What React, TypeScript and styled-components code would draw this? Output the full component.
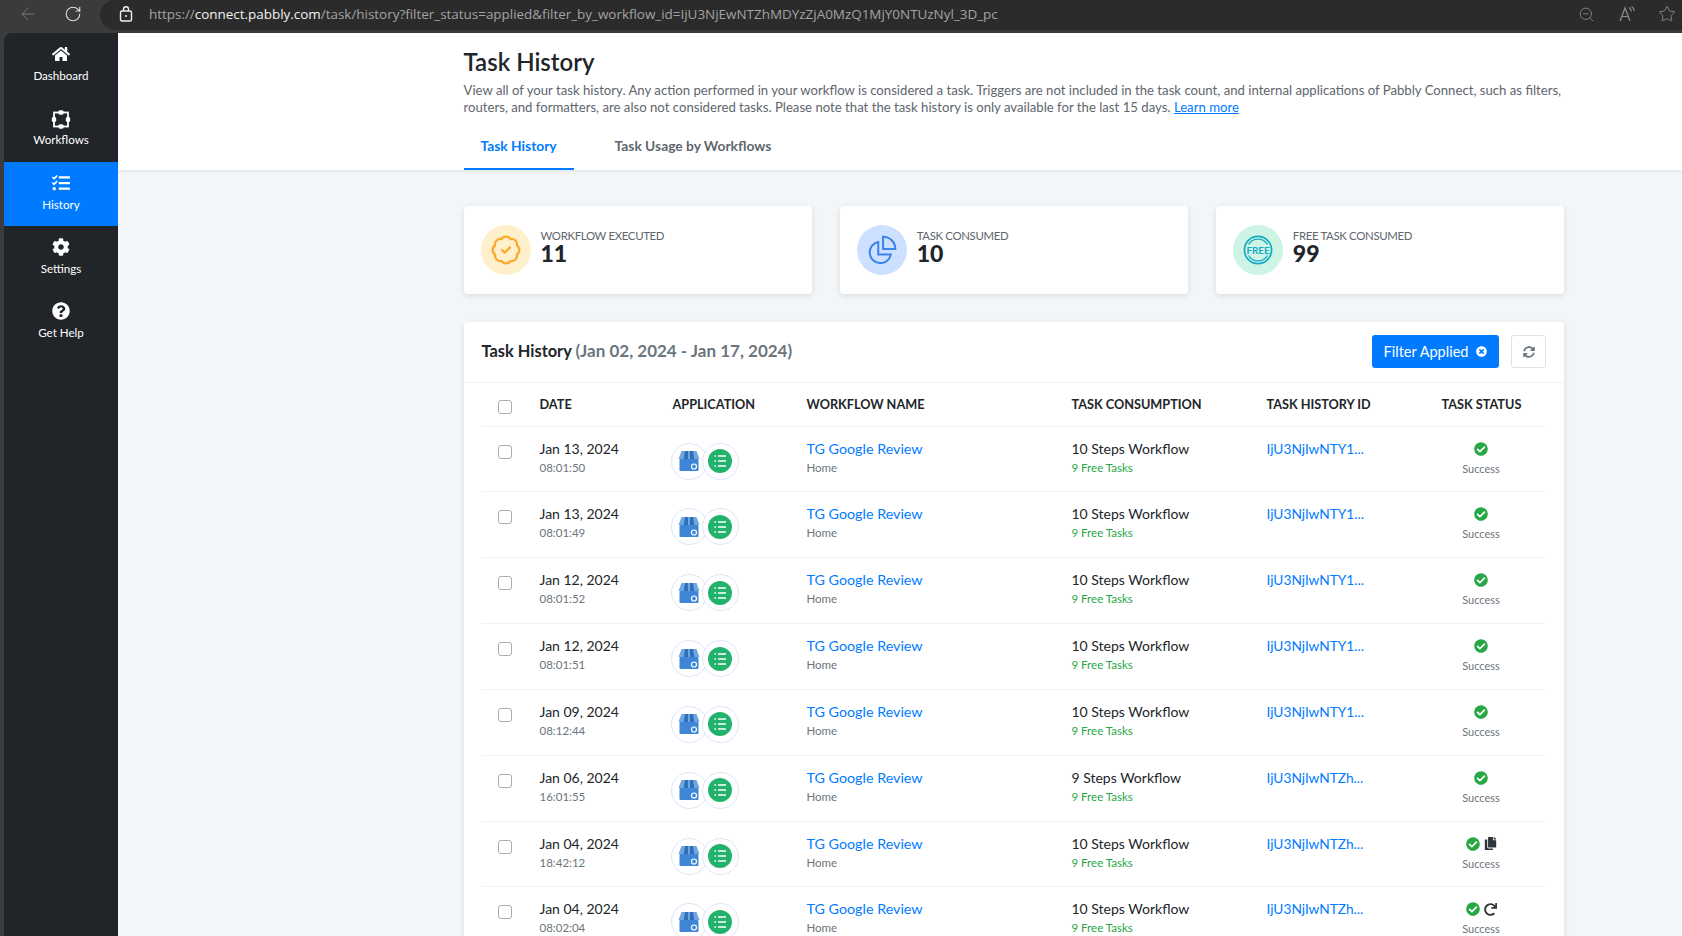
import React from "react";
import styled, { createGlobalStyle } from "styled-components";
import { FaHome, FaCog, FaQuestionCircle, FaTasks, FaCheckCircle, FaCopy, FaRedo, FaSyncAlt, FaTimesCircle } from "react-icons/fa";
import { ArrowLeft, RotateCw, ZoomOut, Star, BadgeCheck } from "lucide-react";

const Global = createGlobalStyle`
  html, body { margin: 0; padding: 0; height: 936px; overflow: hidden; background: #3b3b3b; }
  body { font-family: Lato, "Open Sans", "Liberation Sans", sans-serif; color: #212529; }
  * { box-sizing: border-box; }
`;

const Shell = styled.div`
  width: 1682px; height: 936px; display: flex; flex-direction: column; overflow: hidden;
`;
const BrowserBar = styled.div`
  height: 33px; flex: none; background: #3b3b3b; display: flex; align-items: flex-start;
`;
const NavButtons = styled.div`
  width: 100px; height: 28px; display: flex; align-items: center; gap: 26px; padding-left: 18px; color: #dcdcdc;
`;
const AddressPill = styled.div`
  flex: 1; height: 30px; background: #2b2b2b; border-radius: 15px 0 0 15px;
  display: flex; align-items: center; padding: 0 6px 2px 19px; color: #a3a3a3;
`;
const LockBox = styled.span`
  display: flex; width: 30px; color: #f0f0f0;
`;
const Url = styled.div`
  flex: 1; font: 13.48px "Open Sans", sans-serif; letter-spacing: -0.02px; white-space: nowrap;
  b { font-weight: 400; color: #f2f2f2; }
`;
const BarTools = styled.div`
  display: flex; align-items: center; gap: 22.5px; color: #8d8d8d; font-size: 15px;
`;
const Body = styled.div`
  flex: 1; display: flex; min-height: 0; padding-left: 4px;
`;
const Sidebar = styled.nav`
  width: 114px; flex: none; background: #212529; border-top-left-radius: 8px;
`;
const NavItem = styled.div<{ $active?: boolean }>`
  height: 64.3px; display: flex; flex-direction: column; align-items: center; padding-top: 11px; gap: 4px;
  color: #fff; background: ${(p) => (p.$active ? "#007bff" : "transparent")};
  font-size: 11.6px; line-height: 16px;
  svg { display: block; height: 18px; width: 18px; margin: 1px 0; overflow: visible; }
`;
const Main = styled.main`
  flex: 1; min-width: 0; background: #f3f6f9; display: flex; flex-direction: column;
`;
const PageHead = styled.header`
  height: 137px; flex: none; background: #fff; padding: 12px 118px 0 345.5px;
  box-shadow: 0 1px 4px rgba(0, 0, 0, 0.08); display: flex; flex-direction: column;
`;
const Title = styled.h1`
  margin: 0; font-size: 24px; font-weight: 600; line-height: 34px; color: #212529;
`;
const Desc = styled.p`
  margin: 3px 0 0; font-size: 13.17px; line-height: 17px; color: #5f666d;
  a { color: #007bff; text-decoration: underline; }
`;
const Tabs = styled.div`
  display: flex; margin-top: auto;
`;
const Tab = styled.div<{ $active?: boolean }>`
  height: 43px; padding: 0 17px 6px; margin-right: 24px; display: flex; align-items: center; font-size: 13.8px; font-weight: 700;
  color: ${(p) => (p.$active ? "#007bff" : "#5f666d")};
  box-shadow: ${(p) => (p.$active ? "inset 0 -2px 0 #007bff" : "none")};
`;
const Content = styled.div`
  padding: 35.5px 118px 0 345.5px; display: flex; flex-direction: column; gap: 28px;
`;
const Stats = styled.div`
  display: grid; grid-template-columns: repeat(3, 1fr); gap: 28px;
`;
const StatCard = styled.div`
  height: 88px; background: #fff; border-radius: 4px; box-shadow: 0 2px 6px rgba(0, 0, 0, 0.1);
  display: flex; align-items: center; padding: 0 17px; gap: 10px;
`;
const StatIcon = styled.div<{ $bg: string; $fg: string }>`
  width: 50px; height: 50px; border-radius: 50%; flex: none; background: ${(p) => p.$bg}; color: ${(p) => p.$fg};
  display: flex; align-items: center; justify-content: center;
`;
const StatText = styled.div`
  display: flex; flex-direction: column; margin-top: -8px;
`;
const StatLabel = styled.div`
  font-size: 11.4px; letter-spacing: -0.33px; line-height: 14px; color: #5f666d; text-transform: uppercase;
`;
const StatValue = styled.div`
  font-size: 23px; font-weight: 900; line-height: 20px; color: #212529;
`;
const TableCard = styled.section`
  background: #fff; border-radius: 4px 4px 0 0; box-shadow: 0 2px 6px rgba(0, 0, 0, 0.1);
`;
const TableHead = styled.div`
  height: 61px; border-bottom: 1px solid #eef3f8; display: flex; align-items: center; padding: 0 18px;
`;
const TableTitle = styled.h2`
  margin: 0 auto 2px 0; font-size: 16.4px; font-weight: 700; color: #212529;
  span { color: #6c757d; font-size: 17px; }
`;
const FilterButton = styled.button`
  height: 33px; width: 127px; border: 0; border-radius: 3px; background: #007bff; color: #fff;
  font: 400 14.5px Lato, sans-serif; display: flex; align-items: center; justify-content: center; gap: 8px;
  svg { width: 11px; height: 11px; }
`;
const RefreshButton = styled.button`
  height: 33px; width: 35px; margin-left: 12px; border: 1px solid #dee2e6; border-radius: 3px; background: #fff; color: #6c757d;
  display: flex; align-items: center; justify-content: center; padding: 0;
  svg { width: 12px; height: 12px; }
`;
const Table = styled.div`
  padding: 0 18px;
`;
const cols = "58px 133px 134px 265px 195px 175px 79px 1fr";
const HeadRow = styled.div`
  height: 44px; display: grid; grid-template-columns: ${cols}; align-items: center; border-bottom: 1px solid #eef3f8;
  font-size: 12.7px; font-weight: 700; color: #212529; text-transform: uppercase; white-space: nowrap;
`;
const Row = styled.div`
  height: 65.85px; display: grid; grid-template-columns: ${cols}; border-bottom: 1px solid #eef3f8; padding-top: 12px;
`;
const Check = styled.span`
  display: block; width: 14px; height: 14px; border: 1px solid #a9aeb3; border-radius: 3px; background: #fff;
  margin: 6px 0 0 16px;
`;
const Cell = styled.div`
  display: flex; flex-direction: column;
`;
const Primary = styled.div<{ $link?: boolean }>`
  font-size: ${(p) => (p.$link ? "14.3px" : "14px")}; line-height: 19px; white-space: nowrap; color: ${(p) => (p.$link ? "#007bff" : "#212529")};
`;
const TaskId = styled(Primary)`
  font-size: 13.7px;
`;
const Secondary = styled.div<{ $green?: boolean }>`
  font-size: 11.5px; line-height: 20px; color: ${(p) => (p.$green ? "#28a745" : "#6c757d")};
`;
const Apps = styled.div`
  display: flex; margin: 4px 0 0 -2px;
`;
const AppCircle = styled.div`
  width: 37px; height: 37px; border-radius: 50%; border: 1px solid #dbe6fb; background: #fff;
  display: flex; align-items: center; justify-content: center; flex: none;
  & + & { margin-left: -6px; }
`;
const StatusCell = styled.div`
  display: flex; flex-direction: column; align-items: center;
`;
const StatusIcons = styled.div`
  height: 20px; display: flex; align-items: center; justify-content: center; gap: 4px;
`;
const SuccessIcon = styled(FaCheckCircle)`
  width: 14px; height: 14px; color: #28a745;
`;
const ExtraIcon = styled.span`
  display: flex; color: #2f343a; font-size: 13px;
`;
const StatusLabel = styled.div`
  font-size: 11px; line-height: 19px; color: #6c757d;
`;

const WorkflowIcon = () => (
  <svg viewBox="1 -0.5 18 18" fill="none">
    <rect x="3" y="3" width="14" height="14" stroke="#fff" strokeWidth="1.8" />
    <rect x="7.2" y="0.8" width="5.6" height="4.4" rx="2" fill="#fff" />
    <rect x="7.2" y="14.8" width="5.6" height="4.4" rx="2" fill="#fff" />
    <rect x="0.8" y="7.2" width="4.4" height="5.6" rx="2" fill="#fff" />
    <rect x="14.8" y="7.2" width="4.4" height="5.6" rx="2" fill="#fff" />
  </svg>
);
const LockIcon = () => (
  <svg width="14" height="16" viewBox="0 0 14 16" fill="none" stroke="currentColor" strokeWidth="1.4">
    <rect x="1.5" y="5" width="11" height="10" rx="1.5" />
    <path d="M4.5 5V3.2a2.5 2.5 0 0 1 5 0V5" />
    <circle cx="7" cy="10" r="1" fill="currentColor" stroke="none" />
  </svg>
);
const ReadAloudIcon = () => (
  <svg width="18" height="18" viewBox="0 0 18 18" fill="none" stroke="currentColor" strokeWidth="1.2">
    <path d="M2 16 7 3l5 13M3.8 11.5h6.4" />
    <path d="M11 2.5c1.4 1 2.2 2.4 2.5 4M13.5 1.5c1.6 1 2.6 2.6 3 4.5" />
  </svg>
);
const PieIcon = () => (
  <svg width="32" height="32" viewBox="0 0 30 30" fill="none" stroke="currentColor" strokeWidth="1.9">
    <path d="M11.5 7.5a10 10 0 1 0 11.8 11.8H11.5z" />
    <path d="M16 2.5a11.5 11.5 0 0 1 11.5 11.5H16z" />
  </svg>
);
const FreeIcon = () => (
  <svg width="30" height="30" viewBox="0 0 30 30" fill="none" stroke="currentColor">
    <circle cx="15" cy="15" r="13.6" strokeWidth="1.7" />
    <path d="M5.500 9.500A11 11 0 0 1 24.500 9.500M5.500 20.500a11 11 0 0 0 19 0" strokeWidth="1.3" />
    <text x="15" y="18.600" textAnchor="middle" fill="currentColor" stroke="none" fontSize="9.800" fontWeight="700" fontFamily="Lato, sans-serif">FREE</text>
  </svg>
);
const BusinessIcon = () => (
  <svg width="24" height="22" viewBox="0 0 24 22">
    <rect x="2.500" y="9" width="19" height="12" rx="1" fill="#3f87d6" />
    <path d="M4.500 1h15l3 8H1.500z" fill="#6ea6e2" />
    <path d="M8 1h3v8H6.800zM13 1h3l1.200 8H13z" fill="#2f6fb8" />
    <circle cx="17" cy="16.500" r="2.500" fill="none" stroke="#fff" strokeWidth="1.200" />
  </svg>
);
const SheetIcon = () => (
  <svg width="24" height="24" viewBox="0 0 24 24">
    <circle cx="12" cy="12" r="12" fill="#23b26d" />
    <g stroke="#fff" strokeWidth="1.700">
      <path d="M10 7h8M10 12h8M10 17h8" />
      <path d="M6.500 7h1.500M6.500 12h1.500M6.500 17h1.500" />
    </g>
  </svg>
);

type RowData = { date: string; time: string; steps: number; id: string; extra?: "copy" | "redo" };
const rows: RowData[] = [
  { date: "Jan 13, 2024", time: "08:01:50", steps: 10, id: "IjU3NjIwNTY1..." },
  { date: "Jan 13, 2024", time: "08:01:49", steps: 10, id: "IjU3NjIwNTY1..." },
  { date: "Jan 12, 2024", time: "08:01:52", steps: 10, id: "IjU3NjIwNTY1..." },
  { date: "Jan 12, 2024", time: "08:01:51", steps: 10, id: "IjU3NjIwNTY1..." },
  { date: "Jan 09, 2024", time: "08:12:44", steps: 10, id: "IjU3NjIwNTY1..." },
  { date: "Jan 06, 2024", time: "16:01:55", steps: 9, id: "IjU3NjIwNTZh..." },
  { date: "Jan 04, 2024", time: "18:42:12", steps: 10, id: "IjU3NjIwNTZh...", extra: "copy" },
  { date: "Jan 04, 2024", time: "08:02:04", steps: 10, id: "IjU3NjIwNTZh...", extra: "redo" },
];

export default function App() {
  return (
    <Shell>
      <Global />
      <BrowserBar>
        <NavButtons>
          <ArrowLeft size={20} strokeWidth={1.2} color="#777" />
          <RotateCw size={18} strokeWidth={1.5} />
        </NavButtons>
        <AddressPill>
          <LockBox><LockIcon /></LockBox>
          <Url>https://<b>connect.pabbly.com</b>/task/history?filter_status=applied&amp;filter_by_workflow_id=IjU3NjEwNTZhMDYzZjA0MzQ1MjY0NTUzNyl_3D_pc</Url>
          <BarTools>
            <ZoomOut size={17} strokeWidth={1.2} />
            <ReadAloudIcon />
            <Star size={18} strokeWidth={1.2} />
          </BarTools>
        </AddressPill>
      </BrowserBar>
      <Body>
        <Sidebar>
          <NavItem><FaHome />Dashboard</NavItem>
          <NavItem><WorkflowIcon />Workflows</NavItem>
          <NavItem $active><FaTasks />History</NavItem>
          <NavItem><FaCog />Settings</NavItem>
          <NavItem><FaQuestionCircle />Get Help</NavItem>
        </Sidebar>
        <Main>
          <PageHead>
            <Title>Task History</Title>
            <Desc>
              View all of your task history. Any action performed in your workflow is considered a task. Triggers are not included in the task count, and internal applications of Pabbly Connect, such as filters, routers, and formatters, are also not considered tasks. Please note that the task history is only available for the last 15 days. <a>Learn more</a>
            </Desc>
            <Tabs>
              <Tab $active>Task History</Tab>
              <Tab>Task Usage by Workflows</Tab>
            </Tabs>
          </PageHead>
          <Content>
            <Stats>
              <StatCard>
                <StatIcon $bg="#fff0cc" $fg="#fda92c"><BadgeCheck size={32} strokeWidth={1.7} /></StatIcon>
                <StatText><StatLabel>Workflow Executed</StatLabel><StatValue>11</StatValue></StatText>
              </StatCard>
              <StatCard>
                <StatIcon $bg="#cde0ff" $fg="#3c83ec"><PieIcon /></StatIcon>
                <StatText><StatLabel>Task Consumed</StatLabel><StatValue>10</StatValue></StatText>
              </StatCard>
              <StatCard>
                <StatIcon $bg="#cdf4e4" $fg="#14a8c4"><FreeIcon /></StatIcon>
                <StatText><StatLabel>Free Task Consumed</StatLabel><StatValue>99</StatValue></StatText>
              </StatCard>
            </Stats>
            <TableCard>
              <TableHead>
                <TableTitle>Task History <span>(Jan 02, 2024 - Jan 17, 2024)</span></TableTitle>
                <FilterButton>Filter Applied <FaTimesCircle /></FilterButton>
                <RefreshButton><FaSyncAlt /></RefreshButton>
              </TableHead>
              <Table>
                <HeadRow>
                  <Check />
                  <div>Date</div>
                  <div>Application</div>
                  <div>Workflow Name</div>
                  <div>Task Consumption</div>
                  <div>Task History ID</div>
                  <div>Task Status</div>
                </HeadRow>
                {rows.map((r, i) => (
                  <Row key={i}>
                    <Check />
                    <Cell><Primary>{r.date}</Primary><Secondary>{r.time}</Secondary></Cell>
                    <Apps>
                      <AppCircle><BusinessIcon /></AppCircle>
                      <AppCircle><SheetIcon /></AppCircle>
                    </Apps>
                    <Cell><Primary $link>TG Google Review</Primary><Secondary>Home</Secondary></Cell>
                    <Cell><Primary>{r.steps} Steps Workflow</Primary><Secondary $green>9 Free Tasks</Secondary></Cell>
                    <Cell><TaskId $link>{r.id}</TaskId></Cell>
                    <StatusCell>
                      <StatusIcons>
                        <SuccessIcon />
                        {r.extra === "copy" && <ExtraIcon><FaCopy /></ExtraIcon>}
                        {r.extra === "redo" && <ExtraIcon><FaRedo /></ExtraIcon>}
                      </StatusIcons>
                      <StatusLabel>Success</StatusLabel>
                    </StatusCell>
                  </Row>
                ))}
              </Table>
            </TableCard>
          </Content>
        </Main>
      </Body>
    </Shell>
  );
}
